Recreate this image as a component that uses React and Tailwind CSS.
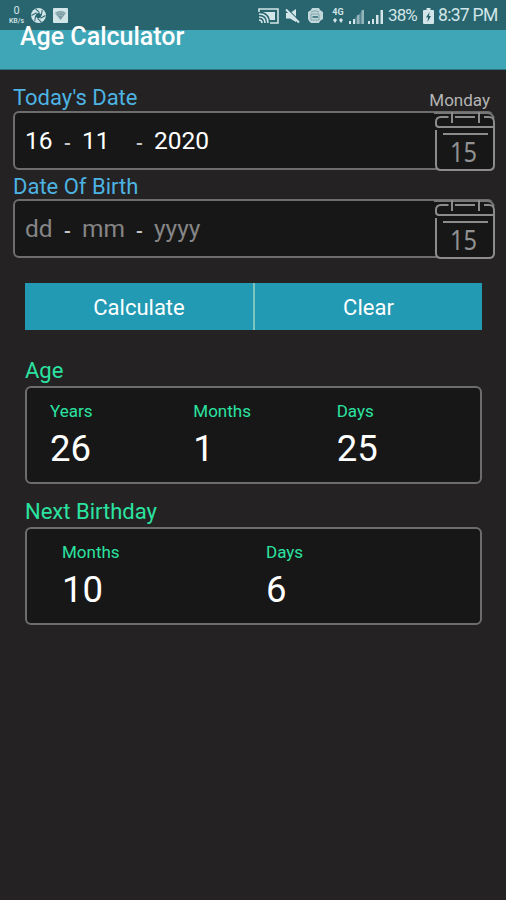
import React from 'react';

const ageParts = [
  { label: 'Years', value: '26' },
  { label: 'Months', value: '1' },
  { label: 'Days', value: '25' }
];

const birthdayParts = [
  { label: 'Months', value: '10' },
  { label: 'Days', value: '6' }
];

const CalendarIcon = () => (
  <svg className="absolute -top-[2px] -right-[4px] h-[62px] w-[62px]" viewBox="0 0 62 62" fill="none" stroke="#8c8c8c" strokeWidth="2">
    <rect x="1.5" y="2" width="59" height="57" rx="4" fill="#171717" stroke="none" />
    <path d="M0 2H53Q58 2 60 7" stroke="#777777" />
    <path d="M14.500 6H7Q2 6 2 11V13Q2 16 5 16H60V11Q60 6 55 6H50M21 6H41" />
    <path d="M18 1V12M45 1V12" />
    <path d="M2 19V54Q2 59 7 59H55Q60 59 60 54V16" />
    <path d="M9 23H54" />
    <text x="16" y="51" fill="#929292" stroke="none" fontFamily="Noto Sans, sans-serif" fontSize="28" textLength="27" lengthAdjust="spacingAndGlyphs">15</text>
  </svg>
);

const CastIcon = () => (
  <svg className="h-[16px] w-[21px]" viewBox="0 0 21 16" fill="none" stroke="#d2e5e8" strokeWidth="1.6">
    <path d="M1 4V1H20V15H12M1 12Q4 12 4 15M1 9Q7 9 7 15M1 6Q10 6 10 15" />
    <path d="M5 4H17V12H12Q11 6 5 4Z" fill="#d2e5e8" stroke="none" />
  </svg>
);

const MuteIcon = () => (
  <svg className="ml-[6px] h-[16px] w-[15px]" viewBox="0 0 15 16">
    <path d="M1 5H5L11 1V14L5 10.500H1Z" fill="#d2e5e8" />
    <path d="M2.500 1L15 13.500" stroke="#29656f" strokeWidth="1.2" />
    <path d="M1 1.500L14 14.500" stroke="#d2e5e8" strokeWidth="2" />
  </svg>
);

const StorageIcon = () => (
  <svg className="ml-[8px] h-[15px] w-[15px]" viewBox="0 0 15 15">
    <path d="M4 0H11L12 2L15 4V11L12 13L11 15H3L1 13L0 11V4L3 2Z" fill="#c0d8dc" />
    <path d="M3 4Q7 1.500 11 4M3 6H11V12H3Z" fill="none" stroke="#6f979e" strokeWidth=".8" />
    <path d="M4.500 9H10" stroke="#29656f" strokeWidth="1.5" />
  </svg>
);

const SignalIcon = ({ dim }) => (
  <svg className="h-[16px] w-[16px]" viewBox="0 0 16 16" fill="#d2e5e8">
    <path d="M0 13H2V16H0ZM4 11H6V16H4Z" />
    <path d="M8 7H10.500V16H8ZM12.500 2H15V16H12.500Z" opacity={dim ? 0.5 : 1} />
    {dim && <path d="M6 10L15 1V16H6Z" opacity="0.25" />}
  </svg>
);

const BatteryIcon = () => (
  <svg className="ml-[5px] h-[16px] w-[11px]" viewBox="0 0 11 16">
    <path d="M3.500 0H7.500V2H10Q11 2 11 3V15Q11 16 10 16H1Q0 16 0 15V3Q0 2 1 2H3.500Z" fill="#d2e5e8" />
    <path d="M6.500 4L3 9.500H5L4.500 14L8 8H6Z" fill="#29656f" />
  </svg>
);

const StatusBar = () => (
  <div className="flex h-[30px] items-center bg-[#29656f] pt-px text-[#d2e5e8]">
    <div className="ml-[7px] flex w-[19px] flex-col items-center">
      <span className="h-[11px] text-[11px] leading-[10px]">0</span>
      <span className="h-[8px] text-[7px] leading-[9px] font-medium">KB/s</span>
    </div>
    <svg className="ml-[5px] h-[15px] w-[15px]" viewBox="0 0 16 16">
      <circle cx="8" cy="8" r="8" fill="#d2e5e8" />
      <path d="M5 1L9 5M12 2L11 8M15.500 8L10 11M11 15L7 11M4 14L5 8M.5 8L6 5" stroke="#29656f" strokeWidth="1.1" />
      <circle cx="8" cy="8" r="2.8" fill="#29656f" />
    </svg>
    <svg className="ml-[7px] h-[15px] w-[15px]" viewBox="0 0 15 15">
      <rect width="15" height="15" rx="1" fill="#d2e5e8" />
      <path d="M2 5Q7.500 1 13 5L7.500 12Z" fill="#789ba1" />
      <path d="M3 6Q7.500 3 12 6M5 8Q7.500 6 10 8" fill="none" stroke="#b0c9cd" strokeWidth=".7" />
    </svg>
    <div className="ml-auto flex items-center pr-[8px]">
      <CastIcon />
      <MuteIcon />
      <StorageIcon />
      <div className="ml-[8px] flex w-[14px] flex-col items-center">
        <span className="h-[9px] text-[9px] leading-[9px] font-bold">4G</span>
        <svg className="mt-px h-[5px] w-[10px]" viewBox="0 0 10 5" fill="#d2e5e8">
          <path d="M0 2L2 0L4 2L2 5ZM6 2L8 0L10 2L8 5Z" />
        </svg>
      </div>
      <div className="ml-[4px] flex gap-[3px]">
        <SignalIcon dim />
        <SignalIcon />
      </div>
      <span className="ml-[4px] w-[30px] text-[17px] tracking-[-0.9px]">38%</span>
      <BatteryIcon />
      <span className="ml-[4px] w-[60px] text-[17.5px] tracking-[-0.7px] whitespace-nowrap">8:37 PM</span>
    </div>
  </div>
);

const ResultCard = ({ title, parts, className, columnClass }) => (
  <section>
    <h2 className="h-[29px] text-[22px] leading-[28px] text-[#2be3a1]">{title}</h2>
    <div className={`flex h-[98px] rounded-md border-2 border-[#6d6d6d] bg-[#171717] ${className}`}>
      {parts.map((part) => (
        <div key={part.label} className={columnClass}>
          <p className="mt-[12px] text-[17px] leading-[22px] text-[#2be3a1]">{part.label}</p>
          <p className="mt-[6px] text-[36.5px] leading-[42px] text-white">{part.value}</p>
        </div>
      ))}
    </div>
  </section>
);

const DateField = ({ day, month, year, color }) => (
  <div className={`relative flex h-[59px] items-center rounded-md border-2 border-[#6d6d6d] bg-[#171717] pt-[2px] pl-[10px] text-[24.5px] ${color}`}>
    <span className="w-[39px]">{day}</span>
    <span className="w-[18px] pt-[3px] text-[20px] font-medium text-[#c5c5c5]">-</span>
    <span className="w-[54px]">{month}</span>
    <span className="w-[18px] pt-[3px] text-[20px] font-medium text-[#c5c5c5]">-</span>
    <span>{year}</span>
    <CalendarIcon />
  </div>
);

const App = () => (
  <div className="min-h-[900px] bg-[#242223] font-['Roboto',sans-serif]">
    <StatusBar />
    <header className="h-[40px] border-b border-[#2a7480] bg-[#3fa6b7] pl-[20px]">
      <h1 className="relative -top-[7px] text-[25px] leading-[28px] font-medium text-white">Age Calculator</h1>
    </header>
    <main>
      <div className="pt-[13px] pr-[12px] pl-[13px]">
        <div className="flex h-[28px] items-center justify-between text-[#4db3e2]">
          <span className="text-[22px]">Today's Date</span>
          <span className="mt-[7px] pr-[4px] text-[17px] text-[#b5b5b5]">Monday</span>
        </div>
        <DateField day="16" month="11" year="2020" color="text-white" />
        <div className="flex h-[29px] items-center pt-[3px] text-[22px] text-[#4db3e2]">Date Of Birth</div>
        <DateField day="dd" month="mm" year="yyyy" color="text-[#858585]" />
      </div>
      <div className="mr-[24px] ml-[25px] mt-[25px] flex h-[47px] text-[22px] text-white">
        <button className="w-[228px] bg-[#239ab3] pt-[2px]">Calculate</button>
        <div className="w-[2px] bg-[#7cc5bf]" />
        <button className="flex-1 bg-[#239ab3] pt-[2px]">Clear</button>
      </div>
      <div className="mt-[27px] mr-[24px] ml-[25px]">
        <ResultCard title="Age" parts={ageParts} className="pl-[23px]" columnClass="w-[144.5px]" />
        <div className="h-[14px]" />
        <ResultCard title="Next Birthday" parts={birthdayParts} className="pl-[35px]" columnClass="w-[204px]" />
      </div>
    </main>
  </div>
);

export default App;
